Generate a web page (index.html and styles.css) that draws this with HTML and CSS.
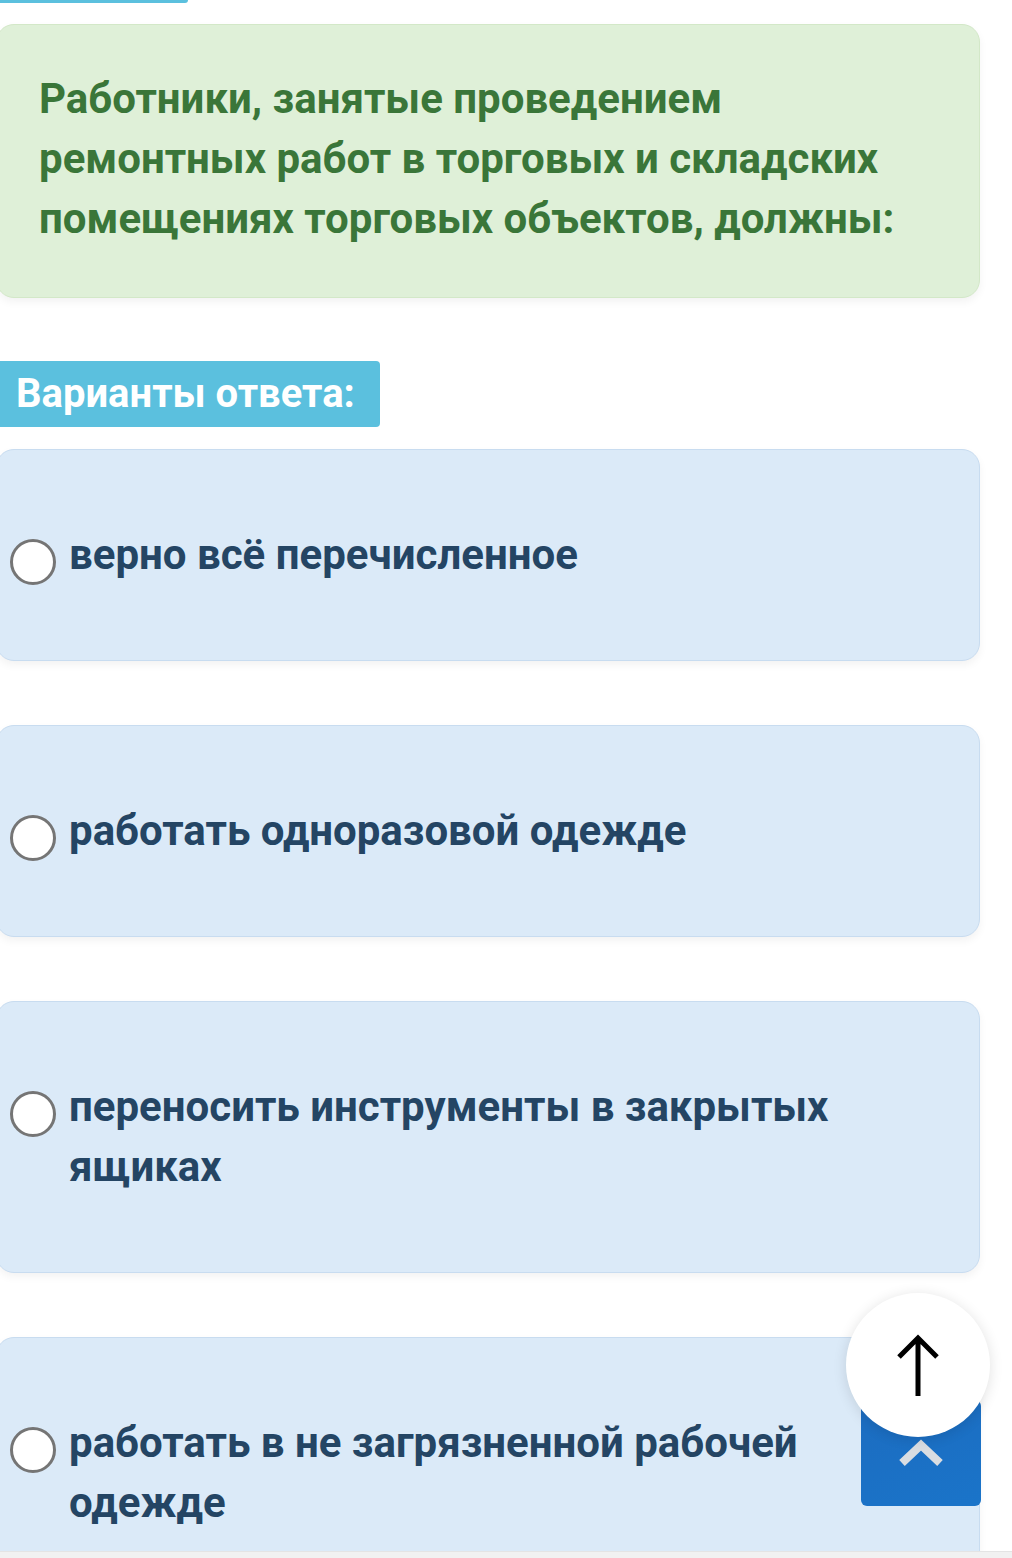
FILE: index.html
```html
<!DOCTYPE html>
<html lang="ru">
<head>
    <meta charset="UTF-8">
    <meta name="viewport" content="width=device-width, initial-scale=1.0">
    <title>Тест</title>
    <link rel="stylesheet" href="styles.css">
</head>
<body>
    <div class="progress-line"></div>
    <main class="quiz">
        <section class="question">
            Работники, занятые проведением ремонтных работ в торговых и складских помещениях торговых объектов, должны:
        </section>

        <div class="answers-label">Варианты ответа:</div>

        <ul class="answers">
            <li class="answer">
                <span class="radio"></span>
                <span class="answer-text">верно всё перечисленное</span>
            </li>
            <li class="answer">
                <span class="radio"></span>
                <span class="answer-text">работать одноразовой одежде</span>
            </li>
            <li class="answer">
                <span class="radio"></span>
                <span class="answer-text">переносить инструменты в закрытых ящиках</span>
            </li>
            <li class="answer">
                <span class="radio"></span>
                <span class="answer-text">работать в не загрязненной рабочей одежде</span>
            </li>
        </ul>
    </main>

    <!-- scroll to top -->
    <a class="to-top" href="#">
        <svg width="48" height="28" viewBox="0 0 48 28">
            <path d="M5 24 L24 6 L43 24" fill="none" stroke="#d9dde2" stroke-width="8"/>
        </svg>
    </a>
    <button class="up-bubble" type="button">
        <svg width="48" height="64" viewBox="0 0 48 64">
            <path d="M24 4 V63 M5 24 L24 5 L43 24" fill="none" stroke="#000" stroke-width="5"/>
        </svg>
    </button>
    <div class="bottom-bar"></div>
</body>
</html>
```

FILE: styles.css
```css
body {
    margin: 0;
    padding: 0;
    background-color: #fff;
    font-family: Roboto, "Noto Sans", sans-serif;
    font-weight: 700;
    font-size: 42px;
    line-height: 60px;
    overflow: hidden;
}

.progress-line {
    width: 188px;
    height: 3px;
    background-color: #5bc0de;
    border-bottom-right-radius: 4px;
}

.quiz {
    width: 984px;
    margin-left: -4px;
    padding-top: 21px;
}

.question {
    padding: 44px 40px 48px 42px;
    background-color: #dff0d8;
    border: 1px solid #d3e8c8;
    border-radius: 18px;
    color: #3a7639;
    box-shadow: 0 4px 8px rgba(0, 0, 0, 0.05);
}

.answers-label {
    display: inline-block;
    margin: 63px 0 0 4px;
    padding: 3px 25px 3px 16px;
    font-size: 40px;
    background-color: #5bc0de;
    color: #fff;
    border-radius: 0 4px 4px 0;
}

.answers {
    list-style: none;
    margin: 22px 0 0;
    padding: 0;
}

.answer {
    display: flex;
    align-items: flex-start;
    gap: 13px;
    padding: 75px 44px 75px 13px;
    margin-bottom: 64px;
    background-color: #dbeaf8;
    border: 1px solid #c8dcf0;
    border-radius: 18px;
    color: #244564;
    box-shadow: 0 4px 8px rgba(0, 0, 0, 0.05);
}

.radio {
    flex: none;
    width: 40px;
    height: 40px;
    margin-top: 14px;
    border: 3px solid #757575;
    border-radius: 50%;
    background-color: #fff;
}

.to-top {
    position: fixed;
    left: 861px;
    top: 1400px;
    width: 120px;
    height: 106px;
    display: flex;
    align-items: center;
    justify-content: center;
    border-radius: 6px;
    background: linear-gradient(160deg, #1c6cc0, #1a74c9);
}

.up-bubble {
    position: fixed;
    left: 846px;
    top: 1293px;
    width: 144px;
    height: 144px;
    padding: 0;
    border: none;
    border-radius: 50%;
    background-color: #fff;
    box-shadow: 0 2px 14px rgba(0, 0, 0, 0.12);
    display: flex;
    align-items: center;
    justify-content: center;
}

.bottom-bar {
    position: fixed;
    left: 0;
    right: 0;
    bottom: 0;
    height: 6px;
    background-color: #f1f1f1;
    border-top: 1px solid #e4e4e4;
}
```
